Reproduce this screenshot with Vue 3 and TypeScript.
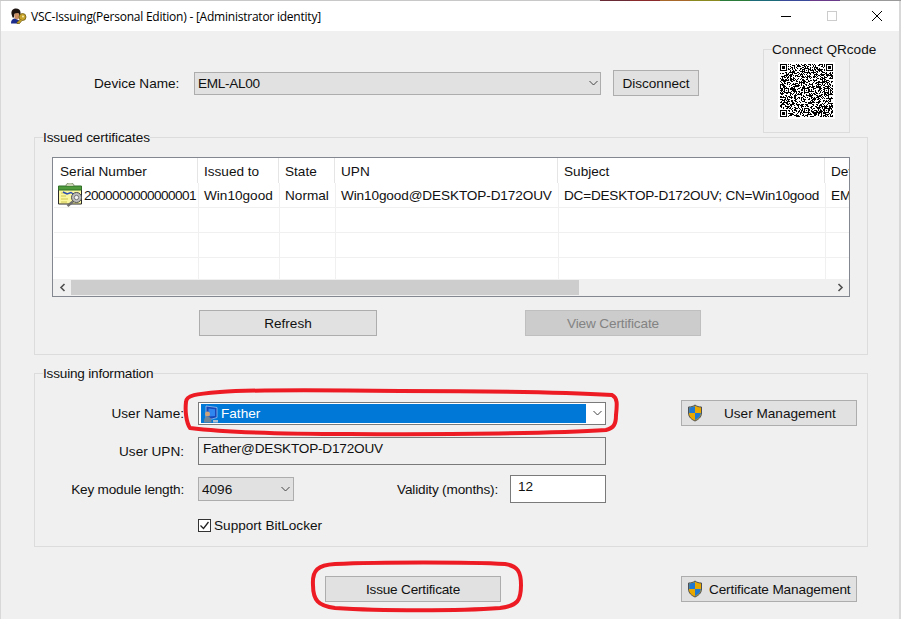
<script setup lang="ts">
const SIZE = 53

function buildQr(): string {
  const m: boolean[][] = []
  let seed = 20231
  const next = (): number => {
    seed = (seed * 1103515245 + 12345) & 0x7fffffff
    return (seed >> 16) & 1
  }
  for (let y = 0; y < SIZE; y++) {
    const row: boolean[] = []
    for (let x = 0; x < SIZE; x++) row.push(next() === 1)
    m.push(row)
  }
  const finder = (fx: number, fy: number): void => {
    for (let y = -1; y <= 7; y++) {
      for (let x = -1; x <= 7; x++) {
        const px = fx + x
        const py = fy + y
        if (px < 0 || py < 0 || px >= SIZE || py >= SIZE) continue
        const ring = x === 0 || x === 6 || y === 0 || y === 6
        const core = x >= 2 && x <= 4 && y >= 2 && y <= 4
        const inside = x >= 0 && x <= 6 && y >= 0 && y <= 6
        m[py][px] = inside && (ring || core)
      }
    }
  }
  finder(0, 0)
  finder(SIZE - 7, 0)
  finder(0, SIZE - 7)
  const align = (ax: number, ay: number): void => {
    for (let y = -2; y <= 2; y++) {
      for (let x = -2; x <= 2; x++) {
        m[ay + y][ax + x] = Math.max(Math.abs(x), Math.abs(y)) !== 1
      }
    }
  }
  for (const [ax, ay] of [[26, 26], [46, 26], [26, 46], [46, 46], [26, 6], [6, 26]]) align(ax, ay)
  let d = ''
  m.forEach((row, y) => {
    row.forEach((on, x) => {
      if (on) d += `M${x} ${y}h1v1h-1z`
    })
  })
  return d
}

const qrPath = buildQr()
const qrBox = `0 0 ${SIZE} ${SIZE}`

interface Column {
  title: string
  width: number
  value: string
}

const columns: Column[] = [
  { title: 'Serial Number', width: 145, value: '2000000000000001' },
  { title: 'Issued to', width: 81, value: 'Win10good' },
  { title: 'State', width: 56, value: 'Normal' },
  { title: 'UPN', width: 223, value: 'Win10good@DESKTOP-D172OUV' },
  { title: 'Subject', width: 267, value: 'DC=DESKTOP-D172OUV; CN=Win10good' },
  { title: 'Device', width: 24, value: 'EML-AL00' }
]
const gridColumns = columns.map((c) => `${c.width}px`).join(' ')
const emptyRows = [1, 2, 3]
</script>

<template>
  <div class="desktop">
    <div class="window">
      <header class="titlebar">
        <svg class="app-icon" width="17" height="16" viewBox="0 0 17 16">
          <path d="M1.500 6C1 2 3.500 .5 6 .5S10.500 2 10.500 4.500V8L9 8.500 8.500 5.500 4.500 6 4 9.500H2.500z" fill="#1d1410" />
          <path d="M4.500 5.500l4-.5.8 3-.3 2.500-2.500 1.200-2-1.500z" fill="#c98f62" />
          <path d="M1 15.500c-.2-3 1.500-4.500 3.500-5l2.500 1 2.500 1v3z" fill="#1c2c8c" />
          <circle cx="12.500" cy="9" r="3.500" fill="#c7a32c" stroke="#6e5a12" stroke-width=".8" />
          <path d="M10 11.500l-3 3v1h2.500l2.500-3" fill="#c7a32c" stroke="#6e5a12" stroke-width=".7" />
          <circle cx="13" cy="8.500" r="1" fill="#f7edb0" />
        </svg>
        <span class="title-text">VSC-Issuing(Personal Edition) - [Administrator identity]</span>
        <div class="caption-buttons">
          <span class="caption-btn"><svg width="10" height="10" viewBox="0 0 10 10"><path d="M0 5.500h10" stroke="#000" fill="none" /></svg></span>
          <span class="caption-btn"><svg width="10" height="10" viewBox="0 0 10 10"><rect x=".5" y=".5" width="9" height="9" fill="none" stroke="#cccccc" /></svg></span>
          <span class="caption-btn"><svg width="10" height="10" viewBox="0 0 10 10"><path d="M0 0l10 10M10 0L0 10" stroke="#000" fill="none" /></svg></span>
        </div>
      </header>

      <main class="client">
        <section class="top">
          <div class="device-row">
            <span class="device-label">Device Name:</span>
            <div class="combo device-combo">
              <span class="combo-text eml">EML-AL00</span>
              <svg class="chevron" width="9" height="6" viewBox="0 0 9 6"><path d="M.5 1l4 4 4-4" fill="none" stroke="#444" /></svg>
            </div>
            <button class="btn disconnect">Disconnect</button>
          </div>
          <div class="qr-group">
            <span class="group-caption qr-caption">Connect QRcode</span>
            <div class="qr-image">
              <svg width="53" height="53" :viewBox="qrBox" shape-rendering="crispEdges"><path :d="qrPath" fill="#000" /></svg>
            </div>
          </div>
        </section>

        <section class="group certs">
          <span class="group-caption tight-1">Issued certificates</span>
          <div class="list">
            <div class="list-body">
              <div class="list-row list-head" :style="{ gridTemplateColumns: gridColumns }">
                <div v-for="c in columns" :key="c.title" class="head-cell">{{ c.title }}</div>
              </div>
              <div class="list-row data-row" :style="{ gridTemplateColumns: gridColumns }">
                <div v-for="(c, i) in columns" :key="c.title" class="cell" :class="[`col-${i}`, { 'serial-cell': i === 0 }]">
                  <svg v-if="i === 0" class="cert-icon" width="25" height="25" viewBox="0 0 25 25">
                    <path d="M.5 5h23v17H.5z" fill="#fbf7a0" stroke="#2b2b2b" />
                    <path d="M.5 4h23v4H.5z" fill="#4f9a3a" stroke="#2f6f28" />
                    <path d="M8 4c0-4.500 8-4.500 8 0" fill="#c4d0b0" stroke="#778866" />
                    <path d="M3 11h6M3 14h5M3 17h7M3 20h6" stroke="#cfc650" />
                    <path d="M5 10l4 2 4-1.500 3 2" fill="none" stroke="#2d4fb0" stroke-width="1.400" />
                    <circle cx="18.500" cy="15.500" r="5" fill="#bdbdbd" stroke="#4e4e4e" />
                    <circle cx="18.500" cy="15.500" r="2.200" fill="#f4f4f4" stroke="#777" />
                    <path d="M15 19.500l-5.500 4.500" stroke="#6e6e6e" stroke-width="2.600" />
                  </svg>
                  <span :class="{ serial: i === 0 }">{{ c.value }}</span>
                </div>
              </div>
              <div v-for="r in emptyRows" :key="r" class="list-row empty-row" :style="{ gridTemplateColumns: gridColumns }">
                <div v-for="c in columns" :key="c.title" class="cell"></div>
              </div>
            </div>
            <div class="scrollbar">
              <span class="scroll-arrow"><svg width="9" height="9" viewBox="0 0 9 9"><path d="M6.500 1l-3.500 3.500 3.500 3.500" fill="none" stroke="#505050" stroke-width="1.600" /></svg></span>
              <span class="scroll-thumb"></span>
              <span class="scroll-arrow scroll-right"><svg width="9" height="9" viewBox="0 0 9 9"><path d="M2.500 1l3.500 3.500-3.500 3.500" fill="none" stroke="#505050" stroke-width="1.600" /></svg></span>
            </div>
          </div>
          <div class="list-actions">
            <button class="btn refresh">Refresh</button>
            <button class="btn view" disabled>View Certificate</button>
          </div>
        </section>

        <section class="group issuing">
          <span class="group-caption tight-2">Issuing information</span>
          <div class="form-row first">
            <span class="form-label">User Name:</span>
            <div class="combo user-combo">
              <div class="highlight">
                <svg class="user-icon" width="16" height="18" viewBox="0 0 16 18">
                  <path d="M3 1l11 1.500v10L9 14H3z" fill="#1648b8" stroke="#cfe0fa" stroke-width=".6" />
                  <path d="M5.500 3.500l6.500 .8v6.700l-6.500 .5z" fill="#2f86ee" />
                  <circle cx="4.500" cy="9" r="2.500" fill="#caa27c" />
                  <path d="M1 17.500c-.2-4 1.500-6 3.500-6s4 2 4 6z" fill="#6f8598" />
                  <path d="M10 15h5v2.500h-5z" fill="#aebfd0" />
                </svg>
                <span>Father</span>
              </div>
              <svg class="chevron" width="9" height="6" viewBox="0 0 9 6"><path d="M.5 1l4 4 4-4" fill="none" stroke="#444" /></svg>
            </div>
            <button class="btn shield-btn user-mgmt">
              <svg class="shield" width="16" height="18" viewBox="0 0 16 18">
                <path d="M8 1c2 1.500 4 2 6.500 2v6c0 4-3 6.500-6.500 8C4.500 15.500 1.500 13 1.500 9V3C4 3 6 2.500 8 1z" fill="#e8a800" stroke="#4a4f57" />
                <path d="M8 2v7H2.200V3.500C4.500 3.400 6.200 3 8 2zM8 9h5.800c0 3.500-2.800 5.700-5.800 7z" fill="#1f78d1" />
              </svg>
              <span class="shield-text">User Management</span>
            </button>
          </div>
          <div class="form-row upn-row">
            <span class="form-label">User UPN:</span>
            <div class="readonly">Father@DESKTOP-D172OUV</div>
          </div>
          <div class="form-row key-row">
            <span class="form-label key-label">Key module length:</span>
            <div class="combo key-combo">
              <span class="combo-text key-text">4096</span>
              <svg class="chevron" width="9" height="6" viewBox="0 0 9 6"><path d="M.5 1l4 4 4-4" fill="none" stroke="#444" /></svg>
            </div>
            <span class="validity-label">Validity (months):</span>
            <div class="textbox">12</div>
          </div>
          <label class="check-row">
            <span class="checkbox"><svg width="11" height="11" viewBox="0 0 11 11"><path d="M1.500 5.500l3 3 5-6.500" fill="none" stroke="#222" stroke-width="1.300" /></svg></span>
            <span>Support BitLocker</span>
          </label>
        </section>

        <section class="bottom">
          <button class="btn issue">Issue Certificate</button>
          <button class="btn shield-btn cert-mgmt">
            <svg class="shield" width="16" height="18" viewBox="0 0 16 18">
              <path d="M8 1c2 1.500 4 2 6.500 2v6c0 4-3 6.500-6.500 8C4.500 15.500 1.500 13 1.500 9V3C4 3 6 2.500 8 1z" fill="#e8a800" stroke="#4a4f57" />
              <path d="M8 2v7H2.200V3.500C4.500 3.400 6.200 3 8 2zM8 9h5.800c0 3.500-2.800 5.700-5.800 7z" fill="#1f78d1" />
            </svg>
            <span>Certificate Management</span>
          </button>
        </section>
      </main>
    </div>

    <svg class="annotations" width="901" height="619" viewBox="0 0 901 619">
      <path d="M186 402C186 395 196 394 220 392C260 389 330 390 400 391C470 391 560 392 612 395C618 398 617 405 616 415C616 424 614 428 606 430C560 433 450 435 350 434C280 434 230 433 190 428C186 422 185 410 186 402Z" />
      <path d="M313 585C312 570 318 565 335 564C380 562 470 562 505 564C518 566 521 572 521 585C521 600 518 606 500 608C460 611 380 611 335 608C318 606 313 600 313 585Z" />
    </svg>
  </div>
</template>

<style>
html,
body {
  margin: 0;
  padding: 0;
  overflow: hidden;
}
</style>

<style scoped>
.desktop {
  position: relative;
  width: 901px;
  height: 619px;
  overflow: hidden;
  padding: 1px 0 0 1px;
  box-sizing: border-box;
  background-color: #d8d8d8;
  background-image: linear-gradient(90deg, #c8c8c8 0 600px, #6a2a35 600px 630px, #8a2a2a 630px 660px, #a8682a 660px 690px, #8a8a20 690px 720px, #2a7a3a 720px 750px, #1a6a7a 750px 780px, #3a4a9a 780px 810px, #6a3a8a 810px 840px, #9a9a9a 840px);
  background-size: 100% 1px;
  background-repeat: no-repeat;
  font-family: "Liberation Sans", Arial, sans-serif;
  font-size: 13.6px;
  color: #111;
}
.window {
  width: 898px;
  height: 618px;
  background: #f0f0f0;
  display: flex;
  flex-direction: column;
}
.titlebar {
  height: 30px;
  flex: none;
  background: #fff;
  display: flex;
  align-items: center;
  padding-left: 9px;
}
.app-icon {
  flex: none;
}
.title-text {
  margin-left: 4px;
  font-family: "Open Sans", sans-serif;
  font-size: 12px;
  letter-spacing: -0.23px;
  color: #000;
  white-space: nowrap;
}
.caption-buttons {
  margin-left: auto;
  display: flex;
  margin-right: -1px;
}
.caption-btn {
  width: 45.5px;
  height: 30px;
  display: flex;
  align-items: center;
  justify-content: center;
}
.client {
  flex: 1;
  padding-left: 33px;
  position: relative;
}
.top {
  height: 106px;
  display: flex;
  align-items: flex-start;
}
.device-row {
  display: flex;
  align-items: center;
  margin-top: 39px;
  margin-left: 60px;
  height: 26px;
}
.device-label {
  width: 86px;
  white-space: nowrap;
}
.btn {
  height: 26px;
  box-sizing: border-box;
  border: 1px solid #adadad;
  background: #e1e1e1;
  font: inherit;
  color: #111;
  padding: 0;
  display: flex;
  align-items: center;
  justify-content: center;
  white-space: nowrap;
}
.combo {
  box-sizing: border-box;
  border: 1px solid #adadad;
  background: #e1e1e1;
  display: flex;
  align-items: center;
  position: relative;
}
.combo-text {
  padding-left: 3px;
}
.eml {
  letter-spacing: -0.3px;
}
.chevron {
  position: absolute;
  right: 3px;
  top: 50%;
  margin-top: -3px;
}
.device-combo {
  margin-left: 14px;
  width: 407px;
  height: 23px;
}
.device-combo .chevron {
  right: 2px;
}
.disconnect {
  width: 86px;
  margin-left: 12px;
}
.qr-group {
  position: relative;
  margin-top: 18px;
  margin-left: 64px;
  width: 87px;
  height: 84px;
  box-sizing: border-box;
  border: 1px solid #dcdcdc;
}
.qr-image {
  width: 57px;
  height: 57px;
  margin: 12px 0 0 14px;
  background: #fff;
  display: flex;
  align-items: center;
  justify-content: center;
}
.group {
  position: relative;
  width: 834px;
  box-sizing: border-box;
  border: 1px solid #dcdcdc;
}
.group-caption {
  position: absolute;
  left: 8px;
  top: -8px;
  background: #f0f0f0;
  line-height: 16px;
  white-space: nowrap;
}
.tight-1 {
  letter-spacing: -0.1px;
}
.tight-2 {
  letter-spacing: -0.2px;
}
.certs {
  height: 218px;
  padding: 19px 0 0 17px;
}
.list {
  width: 798px;
  height: 140px;
  box-sizing: border-box;
  border: 1px solid #828790;
  background: #fff;
  display: flex;
  flex-direction: column;
}
.list-body {
  height: 121px;
  overflow: hidden;
  flex: none;
}
.list-row {
  display: grid;
}
.list-head {
  height: 25px;
}
.head-cell {
  line-height: 27px;
  padding-left: 6px;
  white-space: nowrap;
  overflow: hidden;
  border-right: 1px solid #e5e5e5;
  box-sizing: border-box;
}
.head-cell:first-child {
  padding-left: 7px;
}
.head-cell:last-child {
  border-right: 0;
}
.data-row,
.empty-row {
  height: 25px;
}
.cell {
  box-sizing: border-box;
  border-right: 1px solid #f0f0f0;
  border-bottom: 1px solid #f0f0f0;
  padding-left: 5px;
  line-height: 25px;
  white-space: nowrap;
  overflow: hidden;
  position: relative;
  left: 1px;
}
.col-3 {
  letter-spacing: -0.12px;
}
.col-4 {
  letter-spacing: -0.22px;
}
.serial-cell {
  padding-left: 4px;
  display: flex;
  align-items: center;
}
.cert-icon {
  flex: none;
  margin-top: -1px;
  margin-right: 1px;
}
.serial {
  letter-spacing: -0.56px;
}
.scrollbar {
  flex: 1;
  background: #f0f0f0;
  display: flex;
  align-items: center;
}
.scroll-arrow {
  width: 18px;
  height: 17px;
  display: flex;
  align-items: center;
  justify-content: center;
  flex: none;
}
.scroll-right {
  margin-left: auto;
}
.scroll-thumb {
  width: 508px;
  height: 15px;
  background: #cdcdcd;
}
.list-actions {
  display: flex;
  margin-top: 13px;
  margin-left: 147px;
}
.refresh {
  width: 178px;
}
.view {
  width: 176px;
  margin-left: 148px;
  background: #cccccc;
  border-color: #bfbfbf;
  color: #838383;
  letter-spacing: -0.14px;
}
.issuing {
  margin-top: 18px;
  height: 174px;
  padding-top: 26px;
}
.form-row {
  display: flex;
  align-items: center;
}
.form-row.first {
  height: 26px;
}
.form-label {
  width: 149px;
  text-align: right;
  white-space: nowrap;
  margin-right: 14px;
  flex: none;
}
.key-label {
  letter-spacing: -0.2px;
}
.user-combo {
  width: 408px;
  height: 23px;
  background: #fff;
  border-color: #7a7a7a;
  padding-left: 2px;
}
.highlight {
  width: 385px;
  height: 19px;
  background: #0078d7;
  color: #fff;
  display: flex;
  align-items: center;
  padding-left: 2px;
  box-sizing: border-box;
}
.user-icon {
  flex: none;
  margin: 2px 2px 0 0;
}
.shield-btn {
  width: 176px;
  justify-content: flex-start;
  padding-left: 5px;
}
.shield {
  flex: none;
}
.user-mgmt {
  margin-left: 75px;
}
.shield-text {
  margin-left: 21px;
}
.cert-mgmt span {
  margin-left: 6px;
  letter-spacing: -0.13px;
}
.upn-row {
  margin-top: 11px;
}
.readonly {
  width: 408px;
  height: 28px;
  box-sizing: border-box;
  border: 1px solid #7a7a7a;
  padding: 3px 0 0 4px;
  line-height: 16px;
  letter-spacing: -0.2px;
}
.key-row {
  margin-top: 10px;
  height: 28px;
}
.key-combo {
  width: 96px;
  height: 24px;
}
.validity-label {
  width: 204px;
  text-align: right;
  white-space: nowrap;
  letter-spacing: -0.17px;
}
.textbox {
  width: 96px;
  height: 28px;
  margin-left: 12px;
  box-sizing: border-box;
  border: 1px solid #7a7a7a;
  background: #fff;
  padding-left: 7px;
  line-height: 22px;
}
.check-row {
  display: flex;
  align-items: center;
  margin-top: 13px;
  margin-left: 163px;
  height: 18px;
}
.checkbox {
  width: 13px;
  height: 13px;
  box-sizing: border-box;
  border: 1px solid #333;
  background: #fff;
  margin-right: 3px;
  display: flex;
  align-items: center;
  justify-content: center;
}
.bottom {
  display: flex;
  margin-top: 29px;
  margin-left: 291px;
}
.issue {
  width: 176px;
  letter-spacing: -0.2px;
}
.cert-mgmt {
  margin-left: 180px;
}
.annotations {
  position: absolute;
  left: 0;
  top: 0;
  pointer-events: none;
}
.annotations path {
  fill: none;
  stroke: #ed1c24;
  stroke-width: 4;
}
</style>
